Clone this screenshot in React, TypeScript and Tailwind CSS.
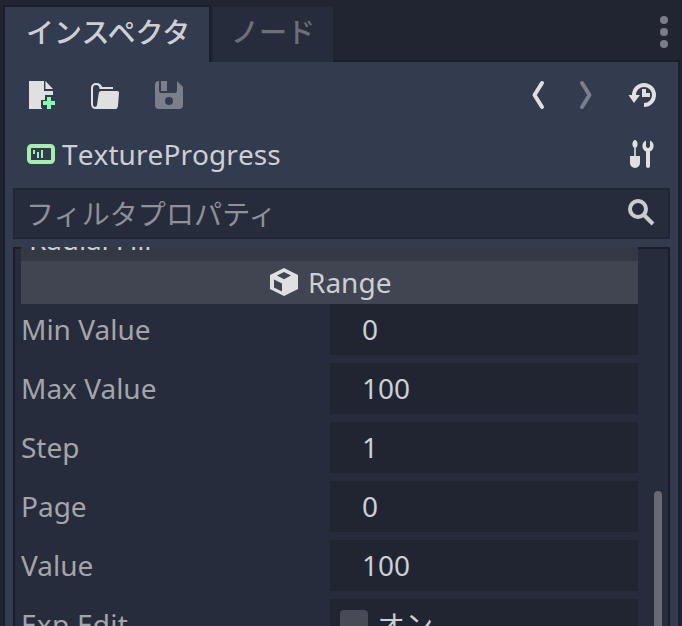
import type { ReactNode } from 'react';

function Icon({ children, className = 'fill-[#e0e0e0]' }: { children: ReactNode; className?: string }) {
  return (
    <svg viewBox="0 0 16 16" className={`h-8 w-8 shrink-0 ${className}`}>
      {children}
    </svg>
  );
}

function Tabs() {
  return (
    <div className="flex h-[62px] shrink-0 items-stretch pl-[3px]">
      <div className="mt-[5px] w-[208px] border-x-2 border-t-2 border-[#191e2c] bg-[#333b4f] pt-[6px] pl-[21px] leading-[38px] font-medium text-[#cdcfd6]">
        インスペクタ
      </div>
      <div className="mt-[7px] ml-[2px] w-[120px] bg-[#262c3b] pt-[6px] pl-[18px] leading-[38px] font-medium text-[#6b6f7a]">
        ノード
      </div>
      <div className="mr-[2px] flex flex-1 justify-end border-b-2 border-[#191e2c] pr-[12px]">
        <svg viewBox="0 0 8 32" className="mt-[16px] h-8 w-2 fill-[#7b7e88]">
          <circle cx="4" cy="4" r="4" />
          <circle cx="4" cy="16" r="4" />
          <circle cx="4" cy="28" r="4" />
        </svg>
      </div>
    </div>
  );
}

function Toolbar() {
  return (
    <div className="flex h-[66px] shrink-0 items-start pt-[17px] pr-[20px] pl-[20px]">
      <Icon>
        <path d="M2 1v14h6.500v-.500H8v-4h2V8h4V6H9.500V1zM10.200 1v4H14z" />
        <path className="fill-[#84ffb1]" d="M11 9v2H9v2h2v2h2v-2h2v-2h-2V9z" />
      </Icon>
      <Icon className="ml-8 fill-[#e0e0e0]">
        <path d="M3.600 2C2.100 2 1 3 1 4.500V12.500C1 14 1.900 15 3.400 15H13c.8 0 1.300-.5 1.450-1.300L15 7.200c.1-.8-.3-1.200-1-1.200H6.300c-.8 0-1.300.4-1.450 1.200L4 13c-.1.600-.4.900-.9.900-.7 0-1.100-.5-1.100-1.300V4.700C2 3.600 2.600 3 3.600 3c1 0 1.600.5 1.700 2H12V4H6.500C6.200 2.700 5.100 2 3.600 2z" />
      </Icon>
      <Icon className="ml-8 fill-[#7b7f8b]">
        <path fillRule="evenodd" d="M3 1a2 2 0 0 0-2 2v10a2 2 0 0 0 2 2h10a2 2 0 0 0 2-2V4l-3-3v5a1 1 0 0 1-1 1H4a1 1 0 0 1-1-1V1zM4 1v5h3V1zM8 9a2 2 0 1 0 0 4 2 2 0 0 0 0-4z" />
      </Icon>
      <div className="flex-1" />
      <svg viewBox="0 0 16 32" className="h-8 w-4 fill-none stroke-[#e0e0e0] stroke-4">
        <path d="M12 4L4.500 16l7.500 12" strokeLinecap="round" strokeLinejoin="round" />
      </svg>
      <svg viewBox="0 0 16 32" className="ml-8 h-8 w-4 fill-none stroke-[#7b7f8b] stroke-4">
        <path d="M4 4l7.500 12L4 28" strokeLinecap="round" strokeLinejoin="round" />
      </svg>
      <Icon className="ml-8 fill-[#e0e0e0]">
        <path fill="none" stroke="#e0e0e0" strokeWidth="2" d="M4 8.600V8a5 5 0 1 1 5 5" />
        <path d="M1.200 8H7l-3 4zM8 5v4h4V7h-2V5z" />
      </Icon>
    </div>
  );
}

function NodeTitle() {
  return (
    <div className="flex h-[60px] shrink-0 items-start pr-[20px] pl-[22px]">
      <svg viewBox="0 0 28 20" className="mt-[16px] h-5 w-7">
        <rect x="2" y="2" width="24" height="16" rx="2.5" fill="none" stroke="#a5efac" strokeWidth="4" />
        <path fill="#a5efac" d="M6 6h2v4H6zM10 8h2v6h-2zM14 6h2v8h-2z" />
      </svg>
      <div className="mt-[7px] ml-[7px] flex-1 leading-[38px] tracking-[0.07px] [font-kerning:none]">TextureProgress</div>
      <Icon className="mt-[10px] fill-[#e0e0e0]">
        <path d="M4.500 1C3.900 1 3.200 2 3.200 3s.4 1.600.9 1.900V9H2v3.500a2.500 2.500 0 0 0 5 0V9H4.900V4.900c.5-.3.900-.9.900-1.900S5.100 1 4.500 1z" />
        <path d="M10 1.200a3 3 0 0 0 0 5.500V14a1 1 0 0 0 2 0V6.700a3 3 0 0 0 0-5.500V4a1 1 0 0 1-2 0z" />
      </Icon>
    </div>
  );
}

function Filter() {
  return (
    <div className="mr-[8px] ml-[8px] flex h-[51px] shrink-0 items-center border-2 border-[#202636] bg-[#262c3b] pr-[13px] pl-[11px]">
      <div className="flex-1 leading-[38px] tracking-[0.1px] text-[#8d919a]">フィルタプロパティ</div>
      <svg viewBox="0 0 28 28" className="mb-[3px] h-7 w-7 fill-none stroke-[#cacbcf] stroke-4">
        <circle cx="11" cy="11" r="8" />
        <path d="M16.500 16.500l9.500 9.500" />
      </svg>
    </div>
  );
}

const properties = [
  ['Min Value', '0'],
  ['Max Value', '100'],
  ['Step', '1'],
  ['Page', '0'],
  ['Value', '100'],
];

function Properties() {
  return (
    <div className="mx-[8px] mt-[8px] flex flex-1 border-x-2 border-t-2 border-[#191e2c] bg-[#262c3b]">
      <div className="-mt-[2px] ml-[6px] w-[617px]">
        <div className="h-[14px] overflow-hidden bg-[#353945]">
          <div className="-mt-[27px] pl-[8px] leading-[38px] tracking-[-0.15px]">Radial Fill</div>
        </div>
        <div className="flex h-[43px] items-start bg-[#414551]">
          <Icon className="mt-[5px] ml-[247px] fill-[#e0e0e0]">
            <path fillRule="evenodd" d="M8 1L1 4.500v7L8 15l7-3.500v-7zM8 3l3.500 1.800L8 6.600 4.500 4.800zM3 6.700l4 2v4l-4-2z" />
          </Icon>
          <div className="mt-[2px] ml-[8px] leading-[38px]">Range</div>
        </div>
        <div className="flex flex-col gap-2">
          {properties.map(([label, value]) => (
            <div key={label} className="flex h-[51px] leading-[38px]">
              <div className="w-[309px] pt-[6px] text-[#a3a5ab]">{label}</div>
              <div className="flex-1 bg-[#202531] pt-[6px] pl-[32px]">{value}</div>
            </div>
          ))}
          <div className="flex h-[51px] leading-[38px]">
            <div className="w-[309px] pt-[6px] tracking-[0.25px] text-[#a3a5ab]">Exp Edit</div>
            <div className="flex flex-1 bg-[#202531] pl-[10px]">
              <div className="mt-[11px] h-7 w-7 rounded-[4px] bg-[#484b55]" />
              <div className="mt-[7px] ml-[9px]">オン</div>
            </div>
          </div>
        </div>
      </div>
      <div className="mt-[242px] ml-[16px] w-2 rounded-t-full bg-[#666973]" />
    </div>
  );
}

export default function App() {
  return (
    <div className="flex h-[626px] w-[682px] flex-col overflow-hidden bg-[#202531] font-['Noto_Sans','Noto_Sans_CJK_JP',sans-serif] text-[28px] whitespace-nowrap text-[#cdcfd6]">
      <Tabs />
      <div className="mr-[2px] ml-[3px] flex h-[564px] flex-col border-x-2 border-[#191e2c] bg-[#333b4f]">
        <Toolbar />
        <NodeTitle />
        <Filter />
        <Properties />
      </div>
    </div>
  );
}
